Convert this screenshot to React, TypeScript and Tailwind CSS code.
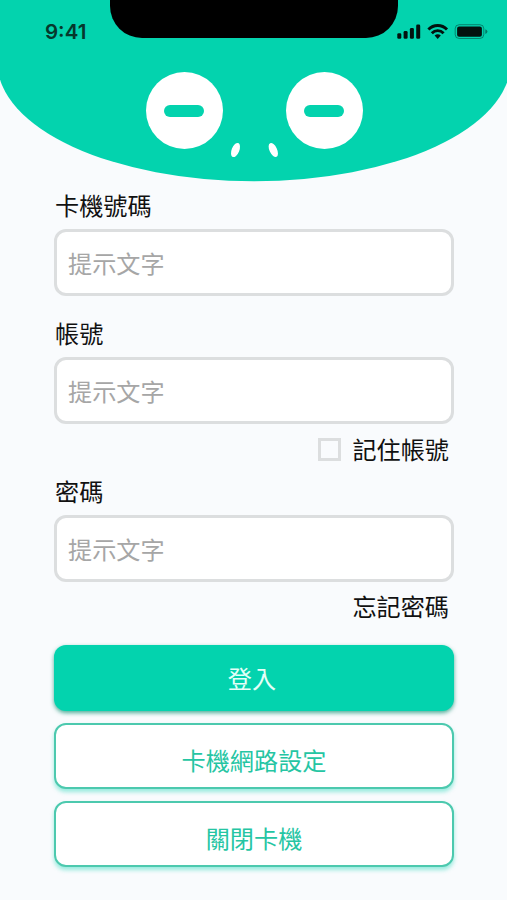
import React, { useState } from 'react'

const StatusIcons = () => (
  <svg className="absolute top-[23px] left-[396px]" width="94" height="18" viewBox="0 0 94 18" fill="#03120e">
    <rect x="1.3" y="10.3" width="4" height="5.4" rx="1.3" />
    <rect x="7.6" y="8" width="4" height="7.7" rx="1.3" />
    <rect x="13.9" y="4.9" width="4" height="10.8" rx="1.3" />
    <rect x="20.2" y="1.6" width="4" height="14.1" rx="1.3" />
    <g fill="none" stroke="#03120e" strokeWidth="2.9">
      <path d="M32.4 6.6 C37.6 1.2 45.8 1.2 51 6.6" />
      <path d="M35.8 10.2 C39.2 6.7 44.2 6.7 47.6 10.2" />
    </g>
    <path d="M38.6 12.5 C40.4 10.9 43 10.9 44.8 12.5 L41.7 15.9 Z" />
    <rect x="59.2" y="1.7" width="28.6" height="13.8" rx="4" fill="none" stroke="#03120e" strokeOpacity="0.4" />
    <rect x="61.1" y="3.6" width="24.8" height="10.2" rx="2" />
    <path d="M89.3 6.3 Q91.4 7 91.4 8.6 T89.3 10.9 Z" fillOpacity="0.45" />
  </svg>
)

const Eye = () => (
  <div className="flex h-[77px] w-[77px] items-center justify-center rounded-full bg-white">
    <div className="h-3 w-10 rounded-full bg-[#03d3ae]" />
  </div>
)

const Header = () => (
  <header className="relative h-[182px] overflow-hidden">
    <svg className="absolute inset-0" width="507" height="182" viewBox="0 0 507 182">
      <path d="M-2.5 0 H510.5 V63 A256.5 118.3 0 0 1 -2.5 63 Z" fill="#03d3ae" />
      <ellipse cx="235.5" cy="150" rx="3.8" ry="7.5" fill="#fff" transform="rotate(22 235.5 150)" />
      <ellipse cx="273.3" cy="150" rx="3.8" ry="7.5" fill="#fff" transform="rotate(-25 273.3 150)" />
    </svg>
    <div className="absolute top-0 left-[110px] h-[38px] w-[288px] rounded-b-[32px] bg-black" />
    <span className="absolute top-5 left-[45px] font-['Inter'] text-[20.5px] leading-6 font-semibold text-[#06382c]">
      9:41
    </span>
    <StatusIcons />
    <div className="relative flex justify-center gap-[63px] pt-[72px] pl-px">
      <Eye />
      <Eye />
    </div>
  </header>
)

const Field = ({ label, type = 'text' }: any) => {
  const [value, setValue] = useState('')

  return (
    <label className="block">
      <span className="block pl-px leading-9">{label}</span>
      <input
        type={type}
        value={value}
        onChange={(e) => setValue(e.target.value)}
        placeholder="提示文字"
        className="mt-1.5 block h-[67px] w-full rounded-xl border-[3px] border-[#dcdedf] bg-white px-[11px] pb-px outline-none placeholder:text-[#a6a6a6]"
      />
    </label>
  )
}

const App = () => {
  const [remember, setRemember] = useState(false)

  return (
    <div className="h-[900px] w-[507px] overflow-hidden bg-[#f9fbfd] font-['Noto_Sans_CJK_TC',sans-serif] text-[24.15px] text-[#111]">
      <Header />
      <form className="ml-[54px] w-[400px] pt-[5px]" onSubmit={(e) => e.preventDefault()}>
        <Field label="卡機號碼" />
        <div className="mt-[19px]">
          <Field label="帳號" />
        </div>
        <label className="mt-[7px] flex h-9 items-center justify-end gap-[11px] pr-[5px]">
          <input
            type="checkbox"
            checked={remember}
            onChange={(e) => setRemember(e.target.checked)}
            className="h-[23px] w-[23px] appearance-none border-[3px] border-[#dcdedf] checked:bg-[#03d3ae]"
          />
          記住帳號
        </label>
        <div className="mt-[6px]">
          <Field label="密碼" type="password" />
        </div>
        <a className="mt-[6px] block pr-[5px] text-right leading-9">忘記密碼</a>
        <div className="mt-[21px] flex flex-col gap-3">
          <button className="h-[66px] rounded-xl bg-[#03d3ae] pr-1 text-[#e4fff8] shadow-[0_2px_4px_#008a6ab0]">
            登入
          </button>
          <button className="h-[66px] rounded-xl border-2 border-[#4cc9ae] bg-white pt-2 text-[#25c5a3] shadow-[0_3px_4px_#03d3ae66]">
            卡機網路設定
          </button>
          <button className="h-[66px] rounded-xl border-2 border-[#4cc9ae] bg-white pt-2 text-[#25c5a3] shadow-[0_3px_4px_#03d3ae66]">
            關閉卡機
          </button>
        </div>
      </form>
    </div>
  )
}

export default App
